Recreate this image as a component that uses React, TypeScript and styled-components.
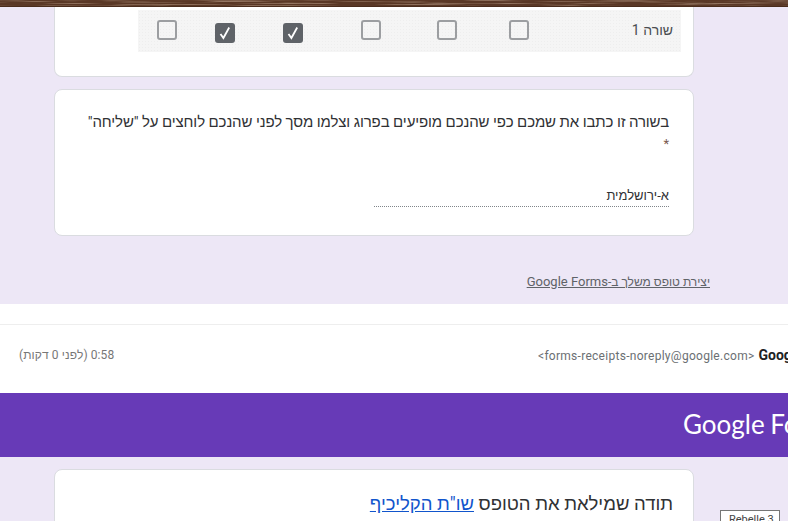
import React from 'react';
import styled, { createGlobalStyle } from 'styled-components';

const GlobalStyle = createGlobalStyle`
  html, body {
    margin: 0;
    padding: 0;
    background: #fff;
    overflow: hidden;
  }
  * {
    box-sizing: border-box;
  }
`;

const Page = styled.div`
  position: relative;
  width: 788px;
  height: 521px;
  overflow: hidden;
  font-family: Roboto, 'Liberation Sans', Arial, sans-serif;
  color: #202124;
`;

const WoodStrip = styled.svg`
  display: block;
  width: 788px;
  height: 7px;
  background: #5a3826;
`;

const FormArea = styled.section`
  height: 297px;
  background: #ede7f6;
  padding: 0 54px;
  display: flex;
  flex-direction: column;
`;

const Card = styled.div`
  width: 640px;
  background: #fff;
  border: 1px solid #dadce0;
  border-radius: 8px;
`;

const GridCard = styled(Card)`
  height: 70px;
  border-top: 0;
  border-radius: 0 0 8px 8px;
  padding: 3px 12px 0 83px;
`;

const GridRow = styled.div`
  height: 42px;
  display: grid;
  grid-template-columns: 58px 58px 78px 78px 74px 70px 1fr;
  align-items: center;
  background-color: #f5f5f5;
  background-image: radial-gradient(#eeeeee 0.5px, transparent 0.6px);
  background-size: 3px 3px;
`;

const BoxCell = styled.div`
  display: flex;
  justify-content: center;
`;

const Box = styled.div<{ $checked?: boolean }>`
  width: 20px;
  height: 20px;
  margin-top: ${(p) => (p.$checked ? '3px' : '-3px')};
  border-radius: 3px;
  border: ${(p) => (p.$checked ? '0' : '2px solid #9c9ea1')};
  background: ${(p) => (p.$checked ? '#5f6368' : 'transparent')};
  display: flex;
  align-items: center;
  justify-content: center;
`;

const RowLabel = styled.div`
  direction: rtl;
  font-size: 14px;
  padding: 0 8px 2px 0;
  color: #4a4d50;
`;

const QuestionCard = styled(Card)`
  height: 147px;
  margin-top: 12px;
  padding: 20px 24px 0 24px;
  direction: rtl;
`;

const QuestionTitle = styled.div`
  font-size: 15px;
  line-height: 24px;
  letter-spacing: -0.12px;
  color: #303134;
  white-space: nowrap;
`;

const Asterisk = styled.div`
  font-size: 13px;
  line-height: 20px;
  color: #7a5a4e;
`;

const AnswerField = styled.div`
  width: 295px;
  margin-top: 29px;
  height: 24px;
  padding-top: 1px;
  font-size: 13px;
  line-height: 23px;
  color: #303134;
  border-bottom: 1px dotted #80858a;
`;

const MadeWith = styled.div`
  margin: 38px 24px 0 0;
  direction: rtl;
  font-size: 12px;
  line-height: 16px;
  color: #5f6368;
  text-decoration: underline;
`;

const MadeWithBrand = styled.span`
  font-size: 13px;
`;

const MailMeta = styled.section`
  height: 89px;
  background: #fff;
  padding-top: 20px;
`;

const MetaRow = styled.div`
  height: 61px;
  border-top: 1px solid #eeeeee;
  display: grid;
  grid-template-columns: 538px 1fr;
  align-items: center;
  font-size: 12px;
  color: #6b6f73;
`;

const TimeText = styled.div`
  justify-self: start;
  margin-left: 19px;
  direction: rtl;
  letter-spacing: 0.1px;
  color: #777;
`;

const Sender = styled.div`
  display: flex;
  align-items: baseline;
  gap: 4px;
  white-space: nowrap;
  overflow: hidden;
  letter-spacing: 0.28px;
`;

const SenderName = styled.strong`
  font-size: 14px;
  letter-spacing: 0;
  color: #202124;
`;

const Banner = styled.section`
  height: 64px;
  background: #673ab7;
  padding: 0 0 3px 683px;
  display: flex;
  align-items: center;
  overflow: hidden;
`;

const BrandName = styled.div`
  font-family: Lato, 'Open Sans', sans-serif;
  font-size: 26px;
  letter-spacing: 0;
  word-spacing: -1px;
  color: #fff;
  white-space: nowrap;
`;

const ReceiptArea = styled.section`
  height: 64px;
  background: #ede7f6;
  padding: 12px 54px 0;
`;

const ReceiptCard = styled(Card)`
  height: 90px;
  padding: 20px 20px 0;
  direction: rtl;
  font-size: 18.5px;
  line-height: 28px;
  color: #303134;
`;

const CourseLink = styled.a`
  color: #1155cc;
  text-decoration: underline;
`;

const Tooltip = styled.div`
  position: absolute;
  left: 720px;
  top: 510px;
  width: 60px;
  height: 24px;
  padding: 2px 0 0 8px;
  background: #fff;
  border: 1px solid #767676;
  font-size: 11px;
  color: #444;
  white-space: nowrap;
`;

const CheckMark = () => (
  <svg width="12" height="14" viewBox="0 0 12 14">
    <path d="M1.5 8 L4.4 12 L10.2 1.5" fill="none" stroke="#fff" strokeWidth="1.8" />
  </svg>
);

const answers = [false, true, true, false, false, false];

const App: React.FC = () => {
  return (
    <Page>
      <GlobalStyle />
      <WoodStrip viewBox="0 0 788 7" preserveAspectRatio="none">
        <filter id="grain" x="0" y="0" width="100%" height="100%">
          <feTurbulence type="fractalNoise" baseFrequency="0.015 0.9" numOctaves="3" seed="4" />
          <feColorMatrix
            type="matrix"
            values="0 0 0 0 0.55  0 0 0 0 0.40  0 0 0 0 0.30  1.6 0 0 0 -0.75"
          />
        </filter>
        <rect width="788" height="7" fill="#5a3826" />
        <rect width="788" height="6" filter="url(#grain)" />
        <rect y="6" width="788" height="1" fill="#4a2c1c" />
      </WoodStrip>
      <FormArea>
        <GridCard>
          <GridRow>
            {answers.map((checked, i) => (
              <BoxCell key={i}>
                <Box $checked={checked}>{checked && <CheckMark />}</Box>
              </BoxCell>
            ))}
            <RowLabel>שורה 1</RowLabel>
          </GridRow>
        </GridCard>
        <QuestionCard>
          <QuestionTitle>בשורה זו כתבו את שמכם כפי שהנכם מופיעים בפרוג וצלמו מסך לפני שהנכם לוחצים על "שליחה"</QuestionTitle>
          <Asterisk>*</Asterisk>
          <AnswerField>א-ירושלמית</AnswerField>
        </QuestionCard>
        <MadeWith>
          יצירת טופס משלך ב-<MadeWithBrand>Google Forms</MadeWithBrand>
        </MadeWith>
      </FormArea>
      <MailMeta>
        <MetaRow>
          <TimeText>0:58 (לפני 0 דקות)</TimeText>
          <Sender>
            <span>&lt;forms-receipts-noreply@google.com&gt;</span>
            <SenderName>Google Forms</SenderName>
          </Sender>
        </MetaRow>
      </MailMeta>
      <Banner>
        <BrandName>Google Forms</BrandName>
      </Banner>
      <ReceiptArea>
        <ReceiptCard>
          תודה שמילאת את הטופס <CourseLink href="#">שו"ת הקליכיף</CourseLink>
        </ReceiptCard>
      </ReceiptArea>
      <Tooltip>Rebelle 3</Tooltip>
    </Page>
  );
};

export default App;
